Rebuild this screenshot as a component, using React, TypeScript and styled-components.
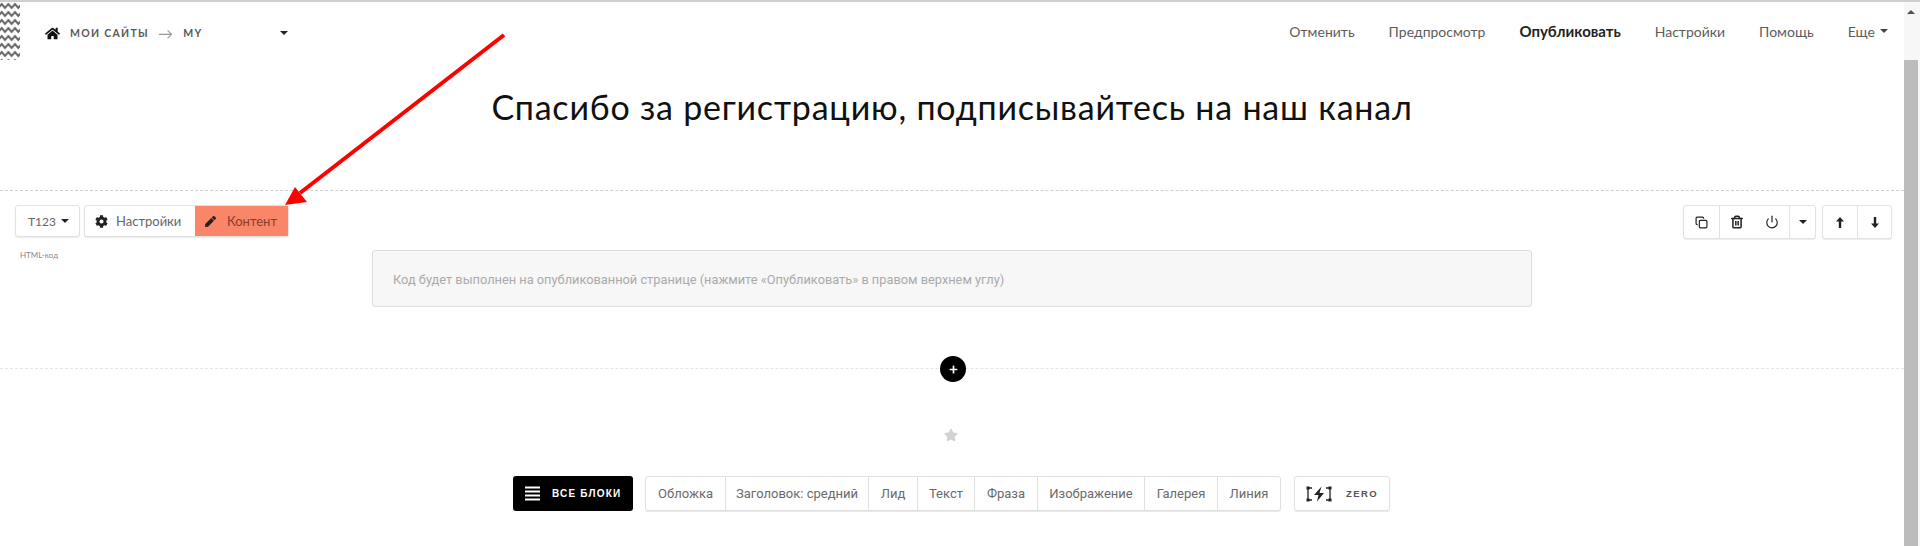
import React from "react"
import styled, { createGlobalStyle } from "styled-components"
import { FaCog, FaHome, FaPen, FaPlus, FaStar } from "react-icons/fa"
import { Copy, Power, Trash2 } from "lucide-react"

const GlobalStyle = createGlobalStyle`
    html, body {
        margin: 0;
        padding: 0;
        height: 546px;
        overflow: hidden;
        background: #fff;
        font-family: "Lato", "Liberation Sans", sans-serif;
    }
    * { box-sizing: border-box; }
`

const Page = styled.div`
    position: relative;
    display: flex;
    width: 1920px;
    height: 546px;
    border-top: 2px solid #cfcfcf;
    overflow: hidden;
`

const Main = styled.main`
    flex: 1;
    min-width: 0;
    display: flex;
    flex-direction: column;
`

const Scrollbar = styled.aside`
    width: 16px;
    display: flex;
    flex-direction: column;
    align-items: flex-start;
    background: #f7f7f7;
    padding-top: 8px;
`

const ScrollUp = styled.div`
    width: 0;
    height: 0;
    margin-left: 3px;
    border-left: 4px solid transparent;
    border-right: 4px solid transparent;
    border-bottom: 4px solid #505050;
`

const ScrollThumb = styled.div`
    width: 14px;
    flex: 1;
    margin-top: 46px;
    background: #bcbcbc;
`

const Header = styled.header`
    height: 58px;
    display: flex;
    align-items: center;
`

const Stripe = styled.svg`
    width: 20px;
    height: 58px;
    flex: none;
`

const Crumbs = styled.div`
    display: flex;
    align-items: center;
    margin-left: 25px;
    width: 243px;
    color: #5a5a5a;
    font-size: 10.5px;
    font-weight: 700;
    letter-spacing: 1.3px;
    padding-top: 4px;
`

const HomeIcon = styled(FaHome)`
    color: #111;
    font-size: 15px;
    margin-right: 10px;
`

const CrumbArrow = styled.span`
    color: #999;
    font-weight: 400;
    font-size: 15px;
    margin: 0 9px;
`

const Caret = styled.span<{ $light?: boolean }>`
    display: inline-block;
    width: 0;
    height: 0;
    border-left: 4px solid transparent;
    border-right: 4px solid transparent;
    border-top: 4px solid ${props => (props.$light ? "#444" : "#222")};
`

const CrumbCaret = styled(Caret)`
    margin-left: auto;
`

const Nav = styled.nav`
    margin-left: auto;
    display: flex;
    align-items: center;
    gap: 34px;
    padding-right: 16px;
    font-size: 14px;
    color: #555;
`

const NavItem = styled.a<{ $strong?: boolean }>`
    font-size: ${props => (props.$strong ? 15 : 14)}px;
    font-weight: ${props => (props.$strong ? 700 : 400)};
    color: ${props => (props.$strong ? "#222" : "#5c5c5c")};
    display: flex;
    align-items: center;
    gap: 5px;
`

const TitleRow = styled.div`
    height: 130px;
    display: flex;
    justify-content: center;
    padding-top: 24px;
`

const Title = styled.h1`
    margin: 0;
    font-size: 34px;
    line-height: 46px;
    font-weight: 400;
    letter-spacing: 0.78px;
    color: #111;
`

const Block = styled.section`
    height: 178px;
    border-top: 1px dashed #cfcfcf;
`

const ToolRow = styled.div`
    display: flex;
    align-items: flex-start;
    padding: 14px 12px 0 15px;
`

const ToolGroup = styled.div<{ $gap?: number; $h?: number }>`
    display: flex;
    height: ${props => props.$h || 32}px;
    margin-left: ${props => props.$gap || 0}px;
    border: 1px solid #e2e2e2;
    border-radius: 3px;
    box-shadow: 0 1px 1px rgba(0, 0, 0, 0.08);
    background: #fff;
    color: #666;
    font-size: 13px;
`

const ToolSpacer = styled.div`
    flex: 1;
`

const ToolCell = styled.div<{ $w: number; $accent?: boolean; $line?: boolean; $pad?: number; $gap?: number; $size?: number }>`
    width: ${props => props.$w}px;
    display: flex;
    align-items: center;
    justify-content: ${props => (props.$pad ? "flex-start" : "center")};
    padding-left: ${props => props.$pad || 0}px;
    gap: ${props => props.$gap || 8}px;
    font-size: ${props => props.$size || 13}px;
    color: ${props => (props.$accent ? "#8a3b2e" : "#666")};
    background: ${props => (props.$accent ? "#fa8669" : "transparent")};
    border-left: ${props => (props.$line ? "1px solid #e2e2e2" : "none")};
    svg { color: #222; flex: none; }
`

const ArrowIcon = styled.svg`
    width: 8px;
    height: 11px;
`

const CodeRow = styled.div`
    display: grid;
    grid-template-columns: 372px 1160px;
    margin-top: 11px;
`

const BlockLabel = styled.div`
    padding: 0 0 0 20px;
    font-size: 8px;
    line-height: 10px;
    color: #888;
`

const CodeBox = styled.div`
    height: 57px;
    display: flex;
    align-items: center;
    padding: 2px 20px 0;
    background: #f7f7f7;
    border: 1px solid #ddd;
    border-radius: 3px;
    font-family: "Roboto", "Liberation Sans", sans-serif;
    font-size: 12.8px;
    color: #aaa;
`

const AddRow = styled.div`
    height: 0;
    display: flex;
    justify-content: center;
    align-items: center;
    border-top: 1px dashed #e4e4e4;
`

const AddButton = styled.div`
    width: 26px;
    height: 26px;
    flex: none;
    border-radius: 50%;
    background: #000;
    color: #fff;
    display: flex;
    align-items: center;
    justify-content: center;
    font-size: 9px;
    margin-left: 2px;
`

const StarRow = styled.div`
    margin-top: 59px;
    height: 14px;
    display: flex;
    justify-content: center;
    padding-right: 2px;
    color: #d2d2d2;
    font-size: 14px;
`

const Palette = styled.div`
    margin-top: 34px;
    padding-left: 513px;
    display: flex;
    align-items: stretch;
    height: 35px;
`

const AllBlocks = styled.div`
    width: 120px;
    display: flex;
    align-items: center;
    gap: 12px;
    padding-left: 12px;
    background: #000;
    border-radius: 3px;
    color: #fff;
    font-size: 10px;
    font-weight: 700;
    letter-spacing: 1.2px;
    font-family: "Liberation Sans", sans-serif;
`

const BarsIcon = styled.svg`
    width: 15px;
    height: 15px;
    flex: none;
`

const Kinds = styled.div`
    margin-left: 12px;
    display: flex;
    border: 1px solid #e0e0e0;
    border-radius: 3px;
    box-shadow: 0 1px 1px rgba(0, 0, 0, 0.1);
    font-family: "Roboto", "Liberation Sans", sans-serif;
    font-size: 13px;
    color: #6a6a6a;
`

const Kind = styled.div<{ $w: number; $first?: boolean }>`
    width: ${props => props.$w}px;
    display: flex;
    align-items: center;
    justify-content: center;
    border-left: ${props => (props.$first ? "none" : "1px solid #e0e0e0")};
`

const ZeroButton = styled.div`
    margin-left: 13px;
    width: 96px;
    display: flex;
    align-items: center;
    justify-content: center;
    gap: 14px;
    border: 1px solid #e0e0e0;
    border-radius: 3px;
    box-shadow: 0 1px 1px rgba(0, 0, 0, 0.1);
    font-family: "Liberation Sans", sans-serif;
    font-size: 9.5px;
    font-weight: 700;
    letter-spacing: 1.4px;
    color: #555;
`

const PointerArrow = styled.svg`
    position: absolute;
    left: 0;
    top: -2px;
    width: 1920px;
    height: 546px;
    pointer-events: none;
`

const kinds: [string, number][] = [
    ["Обложка", 79],
    ["Заголовок: средний", 143],
    ["Лид", 49],
    ["Текст", 57],
    ["Фраза", 63],
    ["Изображение", 107],
    ["Галерея", 73],
    ["Линия", 63],
]

const App: React.FC = () => {
    return (
        <>
            <GlobalStyle />
            <Page>
                <Main>
                    <Header>
                        <Stripe viewBox="0 0 20 58">
                            <defs>
                                <pattern id="zig" width="6.67" height="8" patternUnits="userSpaceOnUse">
                                    <path d="M-1.67 6 L1.67 2 L5 6 L8.33 2" fill="none" stroke="#666" strokeWidth="2" />
                                </pattern>
                            </defs>
                            <rect width="20" height="58" fill="url(#zig)" />
                        </Stripe>
                        <Crumbs>
                            <HomeIcon />
                            МОИ САЙТЫ
                            <CrumbArrow>→</CrumbArrow>
                            MY
                            <CrumbCaret />
                        </Crumbs>
                        <Nav>
                            <NavItem>Отменить</NavItem>
                            <NavItem>Предпросмотр</NavItem>
                            <NavItem $strong>Опубликовать</NavItem>
                            <NavItem>Настройки</NavItem>
                            <NavItem>Помощь</NavItem>
                            <NavItem>Еще <Caret $light /></NavItem>
                        </Nav>
                    </Header>
                    <TitleRow>
                        <Title>Спасибо за регистрацию, подписывайтесь на наш канал</Title>
                    </TitleRow>
                    <Block>
                        <ToolRow>
                            <ToolGroup>
                                <ToolCell $w={63} $pad={12} $size={12} $gap={5}>T123 <Caret /></ToolCell>
                            </ToolGroup>
                            <ToolGroup $gap={4}>
                                <ToolCell $w={110} $pad={10}><FaCog size={13} /> Настройки</ToolCell>
                                <ToolCell $w={93} $accent $pad={10} $gap={11}><FaPen size={11} /> Контент</ToolCell>
                            </ToolGroup>
                            <ToolSpacer />
                            <ToolGroup $h={34}>
                                <ToolCell $w={35}><Copy size={13} strokeWidth={2.2} /></ToolCell>
                                <ToolCell $w={35} $line><Trash2 size={14} strokeWidth={2.6} /></ToolCell>
                                <ToolCell $w={35}><Power size={14} /></ToolCell>
                                <ToolCell $w={26} $line><Caret /></ToolCell>
                            </ToolGroup>
                            <ToolGroup $gap={6} $h={34}>
                                <ToolCell $w={34}>
                                    <ArrowIcon viewBox="0 0 8 11"><path d="M4 0 8 4.5H5.2V11H2.8V4.5H0z" fill="#222" /></ArrowIcon>
                                </ToolCell>
                                <ToolCell $w={34} $line>
                                    <ArrowIcon viewBox="0 0 8 11"><path d="M4 11 8 6.5H5.2V0H2.8V6.5H0z" fill="#222" /></ArrowIcon>
                                </ToolCell>
                            </ToolGroup>
                        </ToolRow>
                        <CodeRow>
                            <BlockLabel>HTML-код</BlockLabel>
                            <CodeBox>Код будет выполнен на опубликованной странице (нажмите «Опубликовать» в правом верхнем углу)</CodeBox>
                        </CodeRow>
                    </Block>
                    <AddRow>
                        <AddButton><FaPlus /></AddButton>
                    </AddRow>
                    <StarRow><FaStar /></StarRow>
                    <Palette>
                        <AllBlocks>
                            <BarsIcon viewBox="0 0 15 15">
                                <path d="M0 1.5h15M0 5.5h15M0 9.5h15M0 13.5h15" stroke="#fff" strokeWidth="2" />
                            </BarsIcon>
                            ВСЕ БЛОКИ
                        </AllBlocks>
                        <Kinds>
                            {kinds.map(([name, w], i) => (
                                <Kind key={name} $w={w} $first={i === 0}>{name}</Kind>
                            ))}
                        </Kinds>
                        <ZeroButton>
                            <svg width="26" height="16" viewBox="0 0 26 16">
                                <path d="M6 2H2v12h4M20 2h4v12h-4" fill="none" stroke="#222" strokeWidth="1.3" />
                                <path d="M0.5 0.5h3v3h-3zM0.5 12.5h3v3h-3zM22.5 0.5h3v3h-3zM22.5 12.5h3v3h-3z" fill="#222" />
                                <path d="M15.5 0.5 8 9h4.5l-1.5 6.5L18 7h-4.5z" fill="#222" />
                            </svg>
                            ZERO
                        </ZeroButton>
                    </Palette>
                </Main>
                <Scrollbar>
                    <ScrollUp />
                    <ScrollThumb />
                </Scrollbar>
                <PointerArrow viewBox="0 0 1920 546">
                    <line x1="504" y1="35" x2="300" y2="193" stroke="#f00" strokeWidth="4" />
                    <polygon points="285,205 295,187 307,202" fill="#f00" />
                </PointerArrow>
            </Page>
        </>
    )
}

export default App
